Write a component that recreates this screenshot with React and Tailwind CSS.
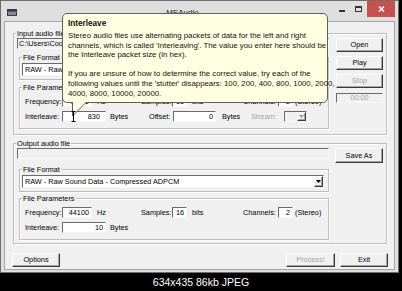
import React from "react";

const sunken =
  "border border-t-[#6a6a6a] border-l-[#6a6a6a] border-r-[#f7f7f7] border-b-[#f7f7f7]";
const raised =
  "border border-t-white border-l-white border-r-[#3a3a3a] border-b-[#3a3a3a] shadow-[inset_-1px_-1px_0_#a5a5a5]";

function Btn({ className, children, disabled }) {
  return (
    <div
      className={`flex items-center justify-center bg-[#f0f0f0] ${raised} ${
        disabled ? "text-[#a3a3a3]" : "text-black"
      } ${className}`}
    >
      {children}
    </div>
  );
}

function Group({ label, className, children }) {
  return (
    <div
      className={`relative border border-[#bdbdbd] shadow-[1px_1px_0_#ffffff,inset_1px_1px_0_#ffffff] ${className}`}
    >
      <span className="absolute left-[2px] top-[-5px] bg-[#f0f0f0] px-[1px] leading-[9px] whitespace-nowrap">
        {label}
      </span>
      {children}
    </div>
  );
}

function Field({ className, children, gray }) {
  return (
    <div
      className={`flex items-center ${gray ? "bg-[#f0f0f0]" : "bg-white"} ${sunken} ${className}`}
    >
      {children}
    </div>
  );
}

function Arrow({ disabled }) {
  return (
    <svg width="5" height="3" viewBox="0 0 5 3">
      <polygon points="0,0 5,0 2.5,3" fill={disabled ? "#a0a0a0" : "#000"} />
    </svg>
  );
}

function Combo({ text, className }) {
  return (
    <Field className={`justify-between ${className}`}>
      <span className="pl-[2px] whitespace-nowrap overflow-hidden">{text}</span>
      <div className={`w-[9px] h-[11px] flex items-center justify-center bg-[#f0f0f0] ${raised}`}>
        <Arrow />
      </div>
    </Field>
  );
}

function FreqRow({ freq, samples, channels }) {
  return (
    <div className="flex items-center h-[11px]">
      <span className="w-[37px]">Frequency:</span>
      <Field className="w-[30px] h-[11px] justify-end pr-[2px]">{freq}</Field>
      <span className="ml-[5px] w-[44px]">Hz</span>
      <span className="w-[31px]">Samples:</span>
      <Field className="w-[15px] h-[11px] justify-end pr-[2px]">{samples}</Field>
      <span className="ml-[5px] w-[51px]">bits</span>
      <span className="w-[35px] text-right pr-[3px]">Channels:</span>
      <Field className="w-[15px] h-[11px] justify-end pr-[2px]">{channels}</Field>
      <span className="ml-[2px]">(Stereo)</span>
    </div>
  );
}

export default function App() {
  return (
    <div className="w-[402px] h-[291px] bg-black flex flex-col overflow-hidden font-['Liberation_Sans',Arial,sans-serif] text-[7.3px] text-black leading-none">
      <div className="flex h-[273px]">
        <div className="relative w-[399px] h-[273px] flex flex-col border border-[#6e6e6e] bg-[#dfdfdf]">
          {/* Title bar */}
          <div className="flex h-[20px] items-start">
            <svg className="ml-[6px] mt-[8px]" width="10" height="7" viewBox="0 0 10 7">
              <rect x="0.5" y="0.5" width="9" height="6" fill="#8a8a8a" stroke="#3e3e3e" />
              <rect x="1" y="1" width="8" height="1.5" fill="#2f2f5a" />
            </svg>
            <div className="flex-1 text-center pt-[8px] pl-[14px] text-[8px] text-[#222]">MEAudio</div>
            <div className="w-[16px] h-[16px] flex items-center justify-center">
              <div className="w-[6px] h-[2px] bg-[#333] mt-[4px]" />
            </div>
            <div className="w-[16px] h-[16px] flex items-center justify-center">
              <div className="w-[7px] h-[6px] border border-[#333] border-t-2" />
            </div>
            <div className="ml-[1px] mr-[3px] w-[28px] h-[16px] bg-[#c75050] flex items-center justify-center">
              <svg width="7" height="6" viewBox="0 0 7 6">
                <path d="M1 0.5 L6 5.5 M6 0.5 L1 5.5" stroke="#fff" strokeWidth="1.6" />
              </svg>
            </div>
          </div>

          {/* Client area */}
          <div className="mx-[3px] h-[249px] flex flex-col bg-[#f0f0f0] border border-[#a4a4a4]">
            {/* Input group */}
            <Group label="Input audio file" className="ml-[8px] mt-[11px] w-[374px] h-[102px]">
              <div className="flex items-start pt-[4px] pl-[3px]">
                <div className="w-[312px] flex flex-col">
                  <Field gray className="w-[312px] h-[11px]">
                    <span className="pl-[1px] whitespace-nowrap">{"C:\\Users\\Cooper\\Music"}</span>
                  </Field>
                  <Group label="File Format" className="ml-[2px] mt-[8px] w-[310px] h-[23px]">
                    <div className="pt-[5px] pl-[2px]">
                      <Combo className="w-[302px] h-[13px]" text="RAW - Raw Sound Data" />
                    </div>
                  </Group>
                  <Group label="File Parameters" className="ml-[2px] mt-[7px] w-[310px] h-[42px]">
                    <div className="pt-[8px] pl-[5px] flex flex-col gap-[4px]">
                      <FreqRow freq="44100" samples="16" channels="2" />
                      <div className="flex items-center h-[11px]">
                        <span className="w-[37px]">Interleave:</span>
                        <Field className="w-[44px] h-[11px] justify-end pr-[5px]">830</Field>
                        <span className="ml-[4px] w-[39px]">Bytes</span>
                        <span className="w-[24px]">Offset:</span>
                        <Field className="w-[43px] h-[11px] justify-end pr-[2px]">0</Field>
                        <span className="ml-[6px] w-[29px]">Bytes</span>
                        <span className="w-[33px] text-[#a3a3a3]">Stream:</span>
                        <Field gray className="w-[23px] h-[11px] justify-end">
                          <div className={`w-[9px] h-[9px] flex items-center justify-center bg-[#f0f0f0] ${raised}`}>
                            <Arrow disabled />
                          </div>
                        </Field>
                      </div>
                    </div>
                  </Group>
                </div>
                <div className="ml-[7px] w-[47px] flex flex-col">
                  <Btn className="h-[14px]">Open</Btn>
                  <Btn className="h-[14px] mt-[4px]">Play</Btn>
                  <Btn disabled className="h-[14px] mt-[4px]">Stop</Btn>
                  <Field gray className="h-[10px] mt-[5px] justify-center text-[#a3a3a3]">00:00</Field>
                </div>
              </div>
            </Group>

            {/* Output group */}
            <Group label="Output audio file" className="ml-[8px] mt-[8px] w-[374px] h-[101px]">
              <div className="flex items-start pt-[4px] pl-[3px]">
                <div className="w-[312px] flex flex-col">
                  <Field gray className="w-[312px] h-[11px]" />
                  <Group label="File Format" className="ml-[2px] mt-[10px] w-[310px] h-[23px]">
                    <div className="pt-[5px] pl-[2px]">
                      <Combo className="w-[302px] h-[13px]" text="RAW - Raw Sound Data - Compressed ADPCM" />
                    </div>
                  </Group>
                  <Group label="File Parameters" className="ml-[2px] mt-[6px] w-[310px] h-[42px]">
                    <div className="pt-[8px] pl-[5px] flex flex-col gap-[4px]">
                      <FreqRow freq="44100" samples="16" channels="2" />
                      <div className="flex items-center h-[11px]">
                        <span className="w-[37px]">Interleave:</span>
                        <Field className="w-[44px] h-[11px] justify-end pr-[2px]">10</Field>
                        <span className="ml-[4px]">Bytes</span>
                      </div>
                    </div>
                  </Group>
                </div>
                <Btn className="ml-[6px] w-[48px] h-[15px]">Save As</Btn>
              </div>
            </Group>

            {/* Bottom buttons */}
            <div className="flex mt-[9px]">
              <Btn className="ml-[7px] w-[48px] h-[14px]">Options</Btn>
              <Btn disabled className="ml-[226px] w-[49px] h-[14px]">Process!</Btn>
              <Btn className="ml-[5px] w-[48px] h-[14px]">Exit</Btn>
            </div>
          </div>

          {/* Tooltip */}
          <div className="absolute left-[61px] top-[12px] w-[266px] h-[90px] rounded-[5px] border border-[#5f5f5f] bg-[#ffffe1] pl-[5px] pt-[5px] text-[7.8px] leading-[9.6px] whitespace-nowrap text-[#111]">
            <div className="font-bold text-[8.2px] leading-[10px] mb-[2px]">Interleave</div>
            <div>Stereo audio files use alternating packets of data for the left and right</div>
            <div>channels, which is called 'Interleaving'. The value you enter here should be</div>
            <div>the Interleave packet size (in hex).</div>
            <div>&nbsp;</div>
            <div>If you are unsure of how to determine the correct value, try each of the</div>
            <div>following values until the 'stutter' disappears: 100, 200, 400, 800, 1000, 2000,</div>
            <div>4000, 8000, 10000, 20000.</div>
          </div>
          <svg className="absolute left-[70px] top-[101px]" width="18" height="22" viewBox="0 0 18 22">
            <polygon points="1,0 1,14 15,0" fill="#ffffe1" />
            <path d="M1.5 0 L1.5 14 L15 0.5" stroke="#5f5f5f" strokeWidth="1" fill="none" />
            <path d="M2.5 10 L2.5 19 M0.5 9.5 L4.5 9.5 M0.5 19.5 L4.5 19.5" stroke="#000" strokeWidth="1" />
          </svg>
        </div>
      </div>
      <div className="flex-1 flex items-center justify-center text-white text-[10.5px] font-['Liberation_Sans',Arial,sans-serif]">
        634x435 86kb JPEG
      </div>
    </div>
  );
}
